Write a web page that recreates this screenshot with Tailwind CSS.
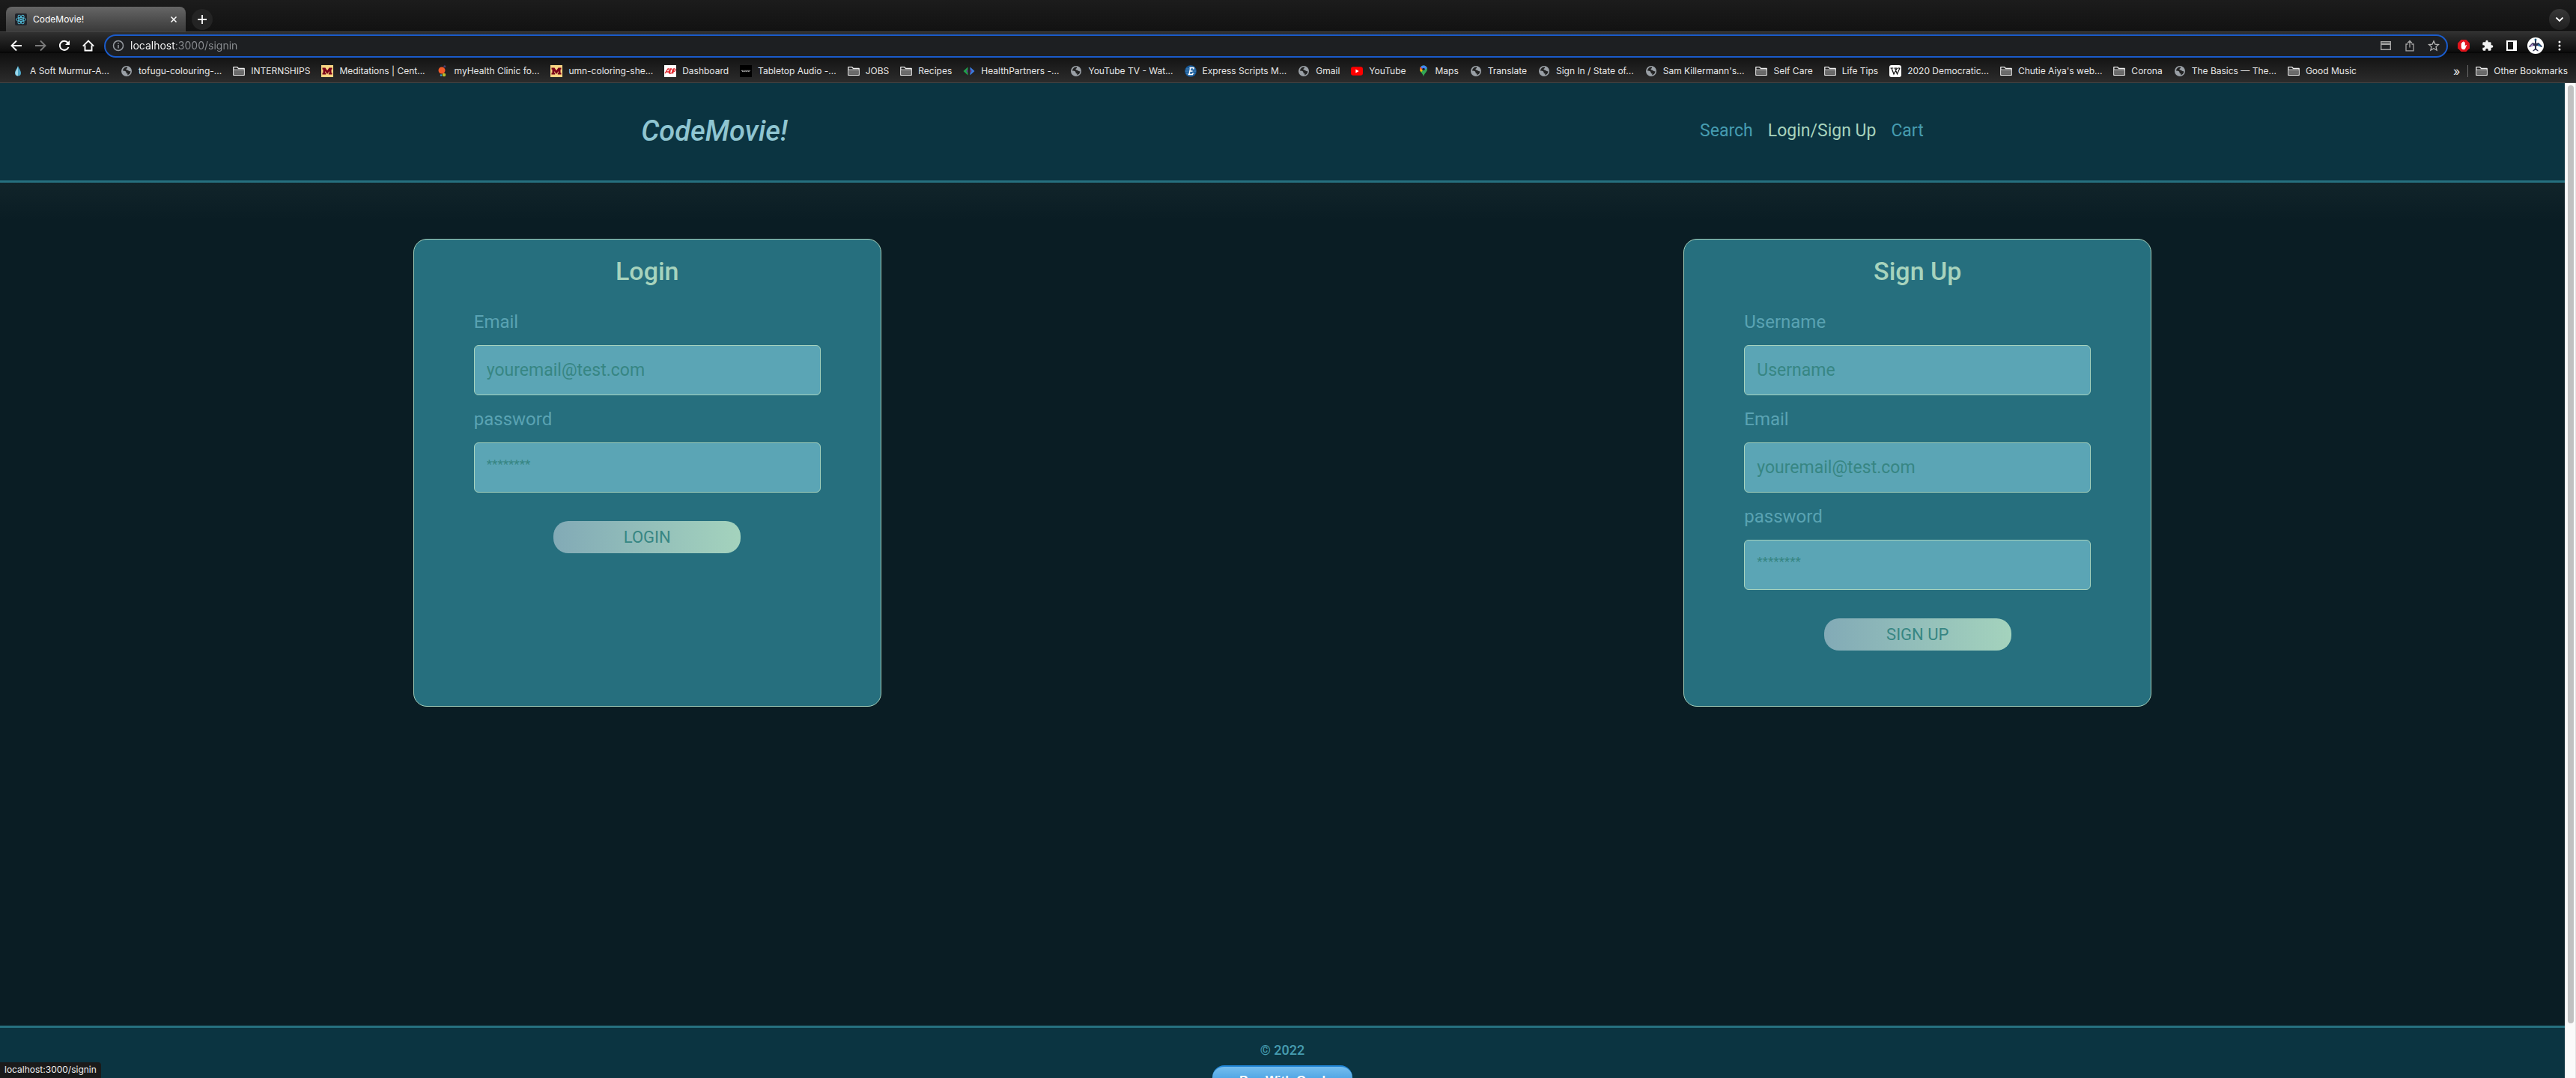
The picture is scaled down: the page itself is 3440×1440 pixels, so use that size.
<!DOCTYPE html>
<html lang="en">
<head>
<meta charset="utf-8">
<title>CodeMovie!</title>
<script src="https://cdn.jsdelivr.net/npm/@tailwindcss/browser@4"></script>
</head>
<body class="flex h-screen flex-col overflow-hidden bg-[#0a1d24] font-[Inter,sans-serif] text-xs text-[#e8e8e8]">

<svg class="hidden" aria-hidden="true">
  <symbol id="folder" viewBox="0 0 16 16"><path d="M.8 13.3V2.7h5l1.7 1.8h7.7v8.8z" fill="#1c1c1c" stroke="#eee" stroke-width="1.3" stroke-linejoin="round"/><path d="M1.5 6.6h13v6h-13z" fill="#6a6a6a"/><path d="M1 6.1h14" stroke="#ddd" stroke-width="1"/></symbol>
  <symbol id="globe" viewBox="0 0 16 16"><circle cx="8" cy="8" r="7" fill="#9aa0a6"/><path d="M8.6 2.6c-2.8-.2-5.4 2-5.5 5 1.300.2 3 .2 4 1.200.7.800.2 1.600.8 2.200.9.7 1.500-.3 1.600 1 0 .6-.5 1.200-1 1.500 3-.4 4.900-2.700 4.900-5.500-1.200.7-2.600.1-3.300-.9-.5-.8-2.300-.3-2.600-1.300-.3-1.300 1.300-1.200 1.600-2 .2-.5-.1-.9-.5-1.200z" fill="#222"/></symbol>
  <symbol id="goldm" viewBox="0 0 16 16"><path fill="#f8d583" d="M0 0h16v16H0z"/><path fill="#7a0019" d="M1.500 3.500h4L8 7.200l2.500-3.700h4v2.200h-1v4.600h1v2.200H9.800v-2.200h1V7.900L8 12 5.200 7.900v2.400h1v2.200H1.500v-2.200h1V5.700h-1z"/></symbol>
</svg>

<div class="shrink-0">
  <div class="flex h-[42px] items-end justify-between bg-linear-to-b from-[#1c1c1c] to-[#121212] pr-2 pl-2">
    <div class="flex items-end gap-2">
      <div class="flex h-[33px] w-60 items-center rounded-t-lg bg-linear-to-b from-[#666] to-[#3a3a3a] pr-2 pl-3 text-white">
        <svg class="size-4" viewBox="0 0 16 16" fill="none" stroke="#53c1de" stroke-width=".9"><rect width="16" height="16" rx="2" fill="#20232a" stroke="none"/><ellipse cx="8" cy="8" rx="6.500" ry="2.500"/><ellipse cx="8" cy="8" rx="6.500" ry="2.500" transform="rotate(60 8 8)"/><ellipse cx="8" cy="8" rx="6.500" ry="2.500" transform="rotate(120 8 8)"/><circle cx="8" cy="8" r="1" fill="#53c1de"/></svg>
        <span class="ml-2 flex-1">CodeMovie!</span>
        <button class="grid size-4 place-items-center" aria-label="Close tab"><svg class="size-2" viewBox="0 0 8 8" stroke="#fff" stroke-width="1.500"><path d="M.5.5l7 7m0-7l-7 7"/></svg></button>
      </div>
      <button class="mb-[2px] grid size-7 place-items-center rounded-full bg-[#242424]" aria-label="New tab"><svg class="size-3" viewBox="0 0 12 12" stroke="#fff" stroke-width="1.800"><path d="M6 0v12M0 6h12"/></svg></button>
    </div>
    <button class="mb-[2px] grid size-7 place-items-center rounded-full bg-linear-to-b from-[#383838] to-[#1f1f1f]" aria-label="Search tabs"><svg class="h-2 w-3" viewBox="0 0 12 8" fill="none" stroke="#fff" stroke-width="1.800"><path d="M1.500 1.500L6 6l4.500-4.500"/></svg></button>
  </div>

  <div class="border-y border-[#434343] bg-[linear-gradient(#303030_0,#0d0d0d_26px,#000_27px,#101010_28px,#2c2c2c_100%)]">
    <div class="flex h-9 items-center gap-[5px] px-[6px]">
      <div class="flex [&>button]:grid [&>button]:h-7 [&>button]:w-8 [&>button]:place-items-center [&_svg]:size-4">
        <button aria-label="Back"><svg viewBox="0 0 16 16" fill="none" stroke="#fff" stroke-width="1.900"><path d="M15 8H2M8 1.500L1.500 8 8 14.500"/></svg></button>
        <button aria-label="Forward"><svg viewBox="0 0 16 16" fill="none" stroke="#7b7b7b" stroke-width="1.900"><path d="M1 8h13M8 1.500L14.500 8 8 14.500"/></svg></button>
        <button aria-label="Reload"><svg viewBox="0 0 16 16" fill="none" stroke="#fff" stroke-width="2"><path d="M13.500 10A6 6 0 1 1 12.500 4"/><path d="M15 1v6H9z" fill="#fff" stroke="none"/></svg></button>
        <button aria-label="Home"><svg viewBox="0 0 16 16" fill="none" stroke="#fff" stroke-width="1.900"><path d="M3.500 7.500v7h9v-7M.8 8.600L8 1.500l7.200 7.100"/></svg></button>
      </div>
      <div class="flex h-[31px] flex-1 items-center rounded-full border-2 border-[#1a5bcb] bg-[#1d1f22] pr-px pl-[9px]">
        <svg class="size-4" viewBox="0 0 16 16" fill="none" stroke="#969ba1" stroke-width="1.500"><circle cx="8" cy="8" r="6.500"/><path d="M8 7v4.500M8 4.200v1.600"/></svg>
        <input aria-label="Address" value="localhost:3000/signin" class="ml-2 flex-1 bg-[linear-gradient(90deg,#fff_61px,#8b8e92_61px)] bg-clip-text text-sm text-transparent outline-none">
        <div class="flex [&>button]:grid [&>button]:w-8 [&>button]:place-items-center [&_svg]:size-4">
          <button aria-label="Payment methods"><svg viewBox="0 0 16 16" fill="none" stroke="#a5a5a5" stroke-width="1.400"><path d="M1.700 2.700h12.600v10.600H1.700z"/><path d="M1 5.800h14" stroke-width="2.500"/></svg></button>
          <button aria-label="Share"><svg viewBox="0 0 16 16" fill="none" stroke="#a5a5a5" stroke-width="1.300"><path d="M5.500 6H3v8.800h10V6h-2.500M8 10.500V2M5 4.500l3-3 3 3"/></svg></button>
          <button aria-label="Bookmark this tab"><svg viewBox="0 0 16 16" fill="none" stroke="#b5b5b5" stroke-width="1.300"><path d="M8 1.800l1.900 4.300 4.600.4-3.500 3.100 1.100 4.600L8 11.800l-4.100 2.400L5 9.600 1.500 6.500l4.600-.4z"/></svg></button>
        </div>
      </div>
      <div class="flex [&>button]:grid [&>button]:h-7 [&>button]:w-8 [&>button]:place-items-center">
        <button aria-label="Ad blocker"><svg class="size-4" viewBox="0 0 16 16"><path d="M4.700 0h6.600L16 4.700v6.600L11.300 16H4.700L0 11.300V4.700z" fill="#e0141c"/><path d="M4.700 9.300V5c0-.9 1.200-.9 1.200 0V3.700c0-.9 1.300-.9 1.300 0V3c0-.9 1.300-.9 1.300 0v.8c0-.9 1.300-.9 1.300 0v4.800l1-1.300c.7-.7 1.400-.1 1 .7L10 12.300c-.4.700-1 1-1.800 1-2.400 0-3.500-1.400-3.500-4z" fill="#fff"/></svg></button>
        <button aria-label="Extensions"><svg class="size-4" viewBox="0 0 24 24" fill="#f1f1f1"><path d="M20.500 11H19V7a2 2 0 0 0-2-2h-4V3.500a2.500 2.500 0 0 0-5 0V5H4a2 2 0 0 0-2 2v3.800h1.500a2.700 2.700 0 0 1 0 5.400H2V20a2 2 0 0 0 2 2h3.800v-1.500a2.700 2.700 0 0 1 5.400 0V22H17a2 2 0 0 0 2-2v-4h1.500a2.500 2.500 0 0 0 0-5z"/></svg></button>
        <button aria-label="Side panel"><svg class="size-[14px]" viewBox="0 0 14 14"><path fill="#fff" fill-rule="evenodd" d="M0 0h14v14H0zM2 2v10h7V2z"/></svg></button>
        <button aria-label="Profile"><svg class="size-[22px]" viewBox="0 0 22 22"><circle cx="11" cy="11" r="11" fill="#fff"/><path d="M10 3h2v5l3-1 5 5-1 1-5-2-2 .5V15l3 3-1 .5-3-2-3 2-1-.5 3-3v-3.500L8 11l-5 2-1-1 5-5 3 1z" fill="#2a2c4a"/><path d="M7 8l-4 4.500L8 11z" fill="#b48bd6"/><path d="M15 8l4 4.500-5-1.500z" fill="#1d6fa8"/><circle cx="11" cy="3" r="1.500" fill="#1e5b80"/></svg></button>
        <button aria-label="Menu"><svg class="size-4" viewBox="0 0 16 16" fill="#fff"><circle cx="8" cy="3" r="1.500"/><circle cx="8" cy="8" r="1.500"/><circle cx="8" cy="13" r="1.500"/></svg></button>
      </div>
    </div>

    <div class="flex h-[31px] items-center justify-between pr-[11px] pl-4 whitespace-nowrap [&_a]:flex [&_a]:items-center [&_a]:gap-2 [&_svg]:size-4 [&_svg]:shrink-0">
      <nav class="flex gap-[15px]" aria-label="Bookmarks">
        <a href="#"><svg viewBox="0 0 16 16"><path d="M8 1c1.500 4 4 6.300 4 9.500a4 4 0 0 1-8 0C4 7.300 6.500 5 8 1z" fill="#4fa8c9"/><path d="M8 2v12.500a4 4 0 0 1-3.500-4C4.500 7.500 7 5.500 8 2z" fill="#9fd8ea"/></svg>A Soft Murmur-A...</a>
        <a href="#"><svg><use href="#globe"/></svg>tofugu-colouring-...</a>
        <a href="#"><svg><use href="#folder"/></svg>INTERNSHIPS</a>
        <a href="#"><svg><use href="#goldm"/></svg>Meditations | Cent...</a>
        <a href="#"><svg viewBox="0 0 16 16"><circle cx="7" cy="7" r="4.500" fill="#f15a29"/><circle cx="10.800" cy="1.800" r="1.500" fill="#4b3f72"/><circle cx="10" cy="13" r="2.300" fill="#b5bd2b"/><circle cx="6" cy="13.500" r="1.200" fill="#3aa0c9"/></svg>myHealth Clinic fo...</a>
        <a href="#"><svg><use href="#goldm"/></svg>umn-coloring-she...</a>
        <a href="#"><svg viewBox="0 0 16 16"><path fill="#fff" d="M0 0h16v16H0z"/><g fill="none" stroke="#e0262d" stroke-width="1.300"><path d="M1 11l4-6h1.500v6M3 9h3.500M7.300 11l1.200-6h1c2.200 0 2 6-.8 6zM11.500 11.500l1.200-6.500h1c2 0 1.500 3.500-1.500 3.500"/></g></svg>Dashboard</a>
        <a href="#"><svg viewBox="0 0 16 16"><path d="M0 0h16v16H0z"/><path d="M2 7.300h12M3 8.600h10" stroke="#aaa" stroke-dasharray="2 .6"/></svg>Tabletop Audio -...</a>
        <a href="#"><svg><use href="#folder"/></svg>JOBS</a>
        <a href="#"><svg><use href="#folder"/></svg>Recipes</a>
        <a href="#"><svg viewBox="0 0 16 16"><path d="M6.500 2.500v3L4.500 8l2 2.500v3L.5 8z" fill="#1fa04a"/><path d="M9.500 2.500v3L11.500 8l-2 2.500v3l6-5.500z" fill="#3b7be0"/><path d="M6.500 5.500L4.500 8l2 2.500zM9.500 5.500l2 2.500-2 2.500z" fill="#6c3f98"/></svg>HealthPartners -...</a>
        <a href="#"><svg><use href="#globe"/></svg>YouTube TV - Wat...</a>
        <a href="#"><svg viewBox="0 0 16 16"><circle cx="8" cy="8" r="7.800" fill="#185a99"/><path d="M2 5h12M1 8h14M2 11h12" stroke="#6ea0cc" stroke-width=".7"/><path d="M6.500 3.500h5.500l-.5 2M7.800 3.500L6 12.500M4.500 12.500h6l.8-2.200M7 8h3.500" stroke="#fff" stroke-width="1.400" fill="none"/></svg>Express Scripts M...</a>
        <a href="#"><svg><use href="#globe"/></svg>Gmail</a>
        <a href="#"><svg viewBox="0 0 16 16"><rect y="2.300" width="16" height="11.500" rx="3" fill="#f00"/><path d="M6.400 5.500v5L10.600 8z" fill="#fff"/></svg>YouTube</a>
        <a href="#"><svg viewBox="0 0 16 16"><path d="M8 .5a5 5 0 0 1 5 5c0 4-4.300 5-5 10-.7-5-5-6-5-10a5 5 0 0 1 5-5z" fill="#34a853"/><path d="M3.200 6.800A5 5 0 0 1 4.200 2.200L8 5.500 4.700 9.400z" fill="#fbbc04"/><path d="M4.200 2.200L3.100 4.500l1.700 2L8 3z" fill="#ea4335"/><path d="M4.200 2.200A5 5 0 0 1 12.800 4L8 7.500z" fill="#4285f4"/><circle cx="8" cy="5.500" r="1.800" fill="#222"/></svg>Maps</a>
        <a href="#"><svg><use href="#globe"/></svg>Translate</a>
        <a href="#"><svg><use href="#globe"/></svg>Sign In / State of...</a>
        <a href="#"><svg><use href="#globe"/></svg>Sam Killermann's...</a>
        <a href="#"><svg><use href="#folder"/></svg>Self Care</a>
        <a href="#"><svg><use href="#folder"/></svg>Life Tips</a>
        <a href="#"><svg viewBox="0 0 16 16"><rect width="16" height="16" rx="3" fill="#fff"/><path d="M1.500 4h3.800M6.500 4H10M11 4h3.500M3 4l3 8 4.500-8M7.500 4l3 8L14 4" stroke="#111" stroke-width="1.200" fill="none"/></svg>2020 Democratic...</a>
        <a href="#"><svg><use href="#folder"/></svg>Chutie Aiya's web...</a>
        <a href="#"><svg><use href="#folder"/></svg>Corona</a>
        <a href="#"><svg><use href="#globe"/></svg>The Basics — The...</a>
        <a href="#"><svg><use href="#folder"/></svg>Good Music</a>
      </nav>
      <div class="flex items-center gap-[10px]">
        <button class="text-base leading-4" aria-label="More bookmarks">»</button>
        <div class="h-4 w-px bg-[#6b6b6b]"></div>
        <a href="#"><svg><use href="#folder"/></svg>Other Bookmarks</a>
      </div>
    </div>
  </div>
</div>

<div class="flex min-h-0 flex-1">
  <div class="flex min-w-0 flex-1 flex-col overflow-hidden font-[Roboto,sans-serif]">
    <header class="flex h-[133px] shrink-0 items-center justify-between border-b-[3px] border-[#26707f] bg-[#0b3441] px-[25%] pb-[2px]">
      <h1 class="text-[38px] font-medium text-[#8fc5d1] italic">CodeMovie!</h1>
      <nav class="flex gap-5 text-[23px] text-[#469cb0]">
        <a href="#">Search</a>
        <a href="#" class="text-[#a7d3bd]">Login/Sign Up</a>
        <a href="#">Cart</a>
      </nav>
    </header>

    <main class="flex min-h-0 flex-1 items-start justify-around bg-[linear-gradient(#11242a_0,#0a1d24_50px)] px-4 pt-[75px]">
      <form class="flex h-[625px] w-[625px] flex-col rounded-[18px] border border-[#a6d3be] bg-[#266f7e] px-20 pt-[17px]">
        <h2 class="mb-[25px] text-center text-[34px] leading-[50px] font-medium text-[#a7d3bd]">Login</h2>
        <div class="flex flex-col gap-[14px]">
          <div class="flex flex-col gap-[13px]">
            <label for="login-email" class="text-2xl leading-9 text-[#5aa3b3]">Email</label>
            <input id="login-email" type="email" placeholder="youremail@test.com" class="h-[67px] rounded-md border border-[#a6d3be] bg-[#5ba5b5] px-4 text-[23px] placeholder:text-[#378683]">
          </div>
          <div class="flex flex-col gap-[13px]">
            <label for="login-password" class="text-2xl leading-9 text-[#5aa3b3]">password</label>
            <input id="login-password" type="password" placeholder="********" class="h-[67px] rounded-md border border-[#a6d3be] bg-[#5ba5b5] px-4 pb-[10px] text-[17px] placeholder:text-[#378683]">
          </div>
        </div>
        <button type="submit" class="mt-[38px] h-[43px] w-[250px] self-center rounded-[20px] bg-linear-to-r from-[#82aab6] to-[#a4d3bd] text-[22px] text-[#378683]">LOGIN</button>
      </form>

      <form class="flex h-[625px] w-[625px] flex-col rounded-[18px] border border-[#a6d3be] bg-[#266f7e] px-20 pt-[17px]">
        <h2 class="mb-[25px] text-center text-[34px] leading-[50px] font-medium text-[#a7d3bd]">Sign Up</h2>
        <div class="flex flex-col gap-[14px]">
          <div class="flex flex-col gap-[13px]">
            <label for="signup-username" class="text-2xl leading-9 text-[#5aa3b3]">Username</label>
            <input id="signup-username" type="text" placeholder="Username" class="h-[67px] rounded-md border border-[#a6d3be] bg-[#5ba5b5] px-4 text-[23px] placeholder:text-[#378683]">
          </div>
          <div class="flex flex-col gap-[13px]">
            <label for="signup-email" class="text-2xl leading-9 text-[#5aa3b3]">Email</label>
            <input id="signup-email" type="email" placeholder="youremail@test.com" class="h-[67px] rounded-md border border-[#a6d3be] bg-[#5ba5b5] px-4 text-[23px] placeholder:text-[#378683]">
          </div>
          <div class="flex flex-col gap-[13px]">
            <label for="signup-password" class="text-2xl leading-9 text-[#5aa3b3]">password</label>
            <input id="signup-password" type="password" placeholder="********" class="h-[67px] rounded-md border border-[#a6d3be] bg-[#5ba5b5] px-4 pb-[10px] text-[17px] placeholder:text-[#378683]">
          </div>
        </div>
        <button type="submit" class="mt-[38px] h-[43px] w-[250px] self-center rounded-[20px] bg-linear-to-r from-[#82aab6] to-[#a4d3bd] text-[22px] text-[#378683]">SIGN UP</button>
      </form>
    </main>

    <footer class="flex h-[70px] shrink-0 flex-col items-center gap-2 overflow-hidden border-t-[3px] border-[#26707f] bg-[#0b3441] pt-[18px]">
      <p class="text-lg leading-6 font-medium text-[#469cb0]">© 2022</p>
      <button class="h-10 w-[187px] shrink-0 rounded-2xl border-t-2 border-[#1f83d3] bg-linear-to-b from-[#74bdee] to-[#0a86d8] font-[Liberation_Sans,sans-serif] text-[17px] font-bold text-white text-shadow-2xs">Pay With Card</button>
    </footer>
  </div>

  <div class="flex w-[15px] shrink-0 flex-col items-center border-x border-[#e4e4e4] bg-[#fafafa] pt-[3px]">
    <div class="w-2 rounded-full bg-[#c1c1c1]" style="height:94.5%"></div>
  </div>
</div>

<div class="absolute bottom-0 left-0 rounded-tr bg-[#1a1a1a] px-[6px] pt-[2px] pb-[3px] leading-4 text-[#eee]">localhost:3000/signin</div>
</body>
</html>
